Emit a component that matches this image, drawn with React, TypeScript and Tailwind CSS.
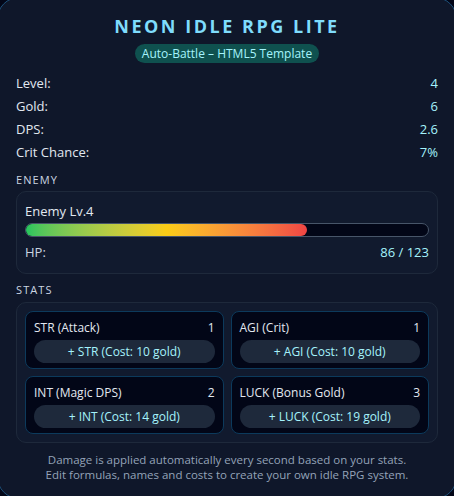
import React from "react";

const stats = [
  { name: "STR (Attack)", value: 1, label: "+ STR (Cost: 10 gold)" },
  { name: "AGI (Crit)", value: 1, label: "+ AGI (Cost: 10 gold)" },
  { name: "INT (Magic DPS)", value: 2, label: "+ INT (Cost: 14 gold)" },
  { name: "LUCK (Bonus Gold)", value: 3, label: "+ LUCK (Cost: 19 gold)" },
];

const info = [
  ["Level:", "4"],
  ["Gold:", "6"],
  ["DPS:", "2.6"],
  ["Crit Chance:", "7%"],
];

export default function App() {
  const hp = 86;
  const maxHp = 123;

  return (
    <div className="w-[454px] h-[496px] overflow-hidden bg-[#020617]">
      <div
        className="-m-[3px] h-[502px] rounded-[22px] border border-[#1d4f78] bg-[#0f172a] px-[18px] pt-[16px] text-[#e2e8f0]"
        style={{ fontFamily: '"Open Sans", "Noto Sans", sans-serif' }}
      >
        {/* Header */}
        <h1 className="text-center text-[18px] font-bold leading-[24px] tracking-[0.14em] text-[#7fdcfc]">
          NEON IDLE RPG LITE
        </h1>
        <div className="mt-[6px] flex justify-center">
          <span className="rounded-full bg-[#0f514f] px-[7px] py-[1px] text-[12px] leading-[17px] text-[#a5f3fc]">
            Auto-Battle – HTML5 Template
          </span>
        </div>

        {/* Info rows */}
        <div className="mt-[9px] flex flex-col">
          {info.map(([k, v]) => (
            <div key={k} className="flex h-[23px] items-center justify-between text-[13px]">
              <span>{k}</span>
              <span className="text-[#a5f3fc]">{v}</span>
            </div>
          ))}
        </div>

        {/* Enemy */}
        <div className="mt-[8px] text-[11px] tracking-[0.1em] text-[#cbd5e1]">ENEMY</div>
        <div className="mt-[2px] rounded-[10px] border border-[#1e293b] bg-[#111a2e] px-[8px] pt-[10px] pb-[12px]">
          <div className="text-[13px] leading-[18px]">Enemy Lv.4</div>
          <div className="mt-[3px] h-[14px] rounded-full border border-[#475569] bg-[#020617]">
            <div
              className="h-full rounded-full bg-gradient-to-r from-[#22c55e] via-[#facc15] to-[#ef4444]"
              style={{ width: `${(hp / maxHp) * 100}%` }}
            />
          </div>
          <div className="mt-[6px] flex justify-between text-[13px] leading-[18px]">
            <span className="text-[#cbd5e1]">HP:</span>
            <span className="text-[#a5f3fc]">
              {hp} / {maxHp}
            </span>
          </div>
        </div>

        {/* Stats */}
        <div className="mt-[8px] text-[11px] tracking-[0.1em] text-[#cbd5e1]">STATS</div>
        <div className="mt-[4px] grid grid-cols-2 gap-[7px] rounded-[10px] border border-[#1e293b] bg-[#111a2e] p-[8px]">
          {stats.map((s) => (
            <div
              key={s.name}
              className="rounded-[8px] border border-[#0c3a5c] bg-[#020617] px-[8px] pt-[7px] pb-[5px]"
            >
              <div className="flex justify-between text-[12px] leading-[18px]">
                <span>{s.name}</span>
                <span>{s.value}</span>
              </div>
              <button className="mt-[3px] h-[23px] w-full rounded-full bg-[#1e293b] text-[12px] text-[#a5f3fc]">
                {s.label}
              </button>
            </div>
          ))}
        </div>

        {/* Footer */}
        <p className="mt-[9px] text-center text-[11.5px] leading-[15px] text-[#94a3b8]">
          Damage is applied automatically every second based on your stats.
          <br />
          Edit formulas, names and costs to create your own idle RPG system.
        </p>
      </div>
    </div>
  );
}
